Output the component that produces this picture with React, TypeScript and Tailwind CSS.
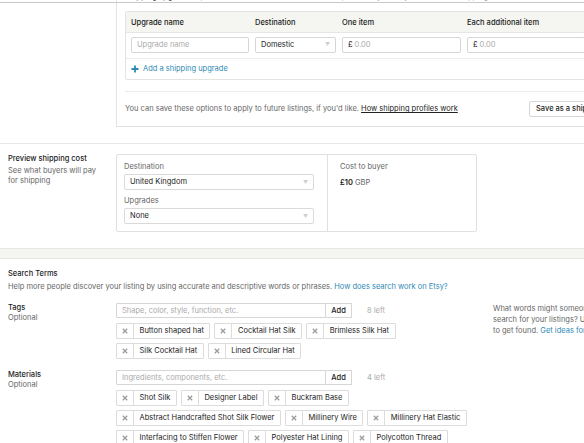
import React from "react";

const TAGS = [
  ["Button shaped hat", "Cocktail Hat Silk", "Brimless Silk Hat"],
  ["Silk Cocktail Hat", "Lined Circular Hat"],
];

const MATERIALS = [
  ["Shot Silk", "Designer Label", "Buckram Base"],
  ["Abstract Handcrafted Shot Silk Flower", "Millinery Wire", "Millinery Hat Elastic"],
  ["Interfacing to Stiffen Flower", "Polyester Hat Lining", "Polycotton Thread"],
];

function Caret() {
  return <span className="ml-auto text-[5px] text-[#cfcfcf]">▼</span>;
}

function Tag({ label }: { label: string }) {
  return (
    <div className="flex h-[16px] items-stretch rounded-[1px] border border-[#dcdcdc] bg-white">
      <div className="flex w-[17px] items-center justify-center border-r border-[#dcdcdc]">
        <svg width="6" height="6" viewBox="0 0 6 6">
          <path d="M0.8 0.8l4.4 4.4M5.2 0.8l-4.4 4.4" stroke="#9c9c9c" strokeWidth="1.3" />
        </svg>
      </div>
      <div className="flex items-center px-[5.5px] text-[#222]">{label}</div>
    </div>
  );
}

function TagField({
  label,
  placeholder,
  left,
  rows,
}: {
  label: string;
  placeholder: string;
  left: string;
  rows: string[][];
}) {
  return (
    <div className="flex">
      <div className="w-[108px] shrink-0 leading-[10px]">
        <div className="font-medium text-[#222]">{label}</div>
        <div>Optional</div>
      </div>
      <div className="w-[377px] shrink-0">
        <div className="flex h-[15px] items-stretch">
          <div className="flex w-[210px] items-center rounded-l-[1px] border border-[#d6d6d6] px-[5px] text-[#aaa]">
            {placeholder}
          </div>
          <div className="flex w-[26px] items-center justify-center border border-l-0 border-[#d6d6d6] bg-white font-medium text-[#222]">
            Add
          </div>
          <div className="ml-[15px] flex items-center text-[#aaa]">{left}</div>
        </div>
        <div className="mt-[5px] flex flex-col gap-[4px]">
          {rows.map((row, i) => (
            <div key={i} className="flex gap-[4px]">
              {row.map((t) => (
                <Tag key={t} label={t} />
              ))}
            </div>
          ))}
        </div>
      </div>
      {label === "Tags" && (
        <div className="shrink-0 whitespace-nowrap leading-[11px]">
          <div>What words might someone use to</div>
          <div>search for your listings? Use all 13 tags</div>
          <div>
            to get found. <span className="text-[#2d8ab5]">Get ideas for tags.</span>
          </div>
        </div>
      )}
    </div>
  );
}

export default function App() {
  return (
    <div className="relative h-[443px] w-[584px] overflow-hidden bg-white font-['Inter',sans-serif] text-[7.5px] text-[#666]">
      {/* sticky header edge */}
      <div className="absolute left-0 top-[2px] h-px w-full bg-[#c8c8c8]" />

      {/* Shipping upgrades */}
      <div className="-mt-[8px] flex">
        <div className="w-[116px] shrink-0" />
        <div className="w-[520px] shrink-0 border-x border-b border-[#e3e3e3] px-[8px]">
          <div className="flex leading-[10px]">
            <div className="w-[173px]">
              <span className="font-medium text-[#222]">Shipping upgrades</span> Optional
            </div>
            <div>Add faster options for your buyers (added to shipping cost)</div>
          </div>

          <div className="mt-[9px] rounded-[2px] border border-[#e3e3e3]">
            <div className="flex h-[21px] items-center gap-[6px] border-b border-[#e6e6e3] bg-[#f5f5f1] px-[5px] pt-[1px] font-medium text-[#222]">
              <div className="w-[118px]">Upgrade name</div>
              <div className="w-[81px]">Destination</div>
              <div className="w-[119px]">One item</div>
              <div className="w-[118px]">Each additional item</div>
            </div>
            <div className="flex gap-[6px] border-b border-[#ececec] px-[5px] pb-[5px] pt-[4px]">
              <div className="flex h-[16px] w-[118px] items-center rounded-[2px] border border-[#d6d6d6] px-[5px] text-[#aaa]">
                Upgrade name
              </div>
              <div className="flex h-[16px] w-[81px] items-center rounded-[2px] border border-[#d6d6d6] px-[5px] text-[#222]">
                Domestic
                <Caret />
              </div>
              <div className="flex h-[16px] w-[119px] items-center rounded-[2px] border border-[#d6d6d6] px-[5px] text-[#aaa]">
                <span className="mr-[2px] text-[#222]">£</span>0.00
              </div>
              <div className="flex h-[16px] w-[118px] items-center rounded-[2px] border border-[#d6d6d6] px-[5px] text-[#aaa]">
                <span className="mr-[2px] text-[#222]">£</span>0.00
              </div>
            </div>
            <div className="flex h-[20px] items-center px-[5px] text-[#2d8ab5]">
              <svg width="8" height="8" viewBox="0 0 8 8" className="mr-[4px]">
                <path d="M4 0.5v7M0.5 4h7" stroke="#2d8ab5" strokeWidth="1.8" />
              </svg>
              Add a shipping upgrade
            </div>
          </div>

          <div className="mt-[11px] flex h-[35px] items-center border-t border-[#ececec]">
            <div className="w-[404px] shrink-0">
              You can save these options to apply to future listings, if you'd like.{" "}
              <span className="text-[#222] underline underline-offset-1">How shipping profiles work</span>
            </div>
            <div className="flex h-[16px] items-center whitespace-nowrap rounded-[2px] border border-[#d6d6d6] bg-white px-[6px] font-medium text-[#222]">
              Save as a shipping profile
            </div>
          </div>
        </div>
      </div>

      {/* Preview shipping cost */}
      <div className="mt-[16px] flex border-t border-[#e8e8e8] pt-[10px]">
        <div className="w-[116px] shrink-0 px-[8px] leading-[10px]">
          <div className="font-medium text-[#222]">Preview shipping cost</div>
          <div className="mt-[2px]">See what buyers will pay for shipping</div>
        </div>
        <div className="flex w-[361px] shrink-0 rounded-[2px] border border-[#e0e0e0]">
          <div className="w-[211px] shrink-0 border-r border-[#e0e0e0] pb-[7px] pl-[7px] pr-[13px] pt-[7px] leading-[10px]">
            <div>Destination</div>
            <div className="mt-[2px] flex h-[16px] items-center rounded-[2px] border border-[#dadada] px-[5px] text-[#222]">
              United Kingdom
              <Caret />
            </div>
            <div className="mt-[6px]">Upgrades</div>
            <div className="mt-[2px] flex h-[16px] items-center rounded-[2px] border border-[#dadada] px-[5px] text-[#222]">
              None
              <Caret />
            </div>
          </div>
          <div className="flex-1 pl-[12px] pt-[7px] leading-[10px]">
            <div>Cost to buyer</div>
            <div className="mt-[6px]">
              <span className="font-semibold text-[#222]">£10</span> GBP
            </div>
          </div>
        </div>
      </div>

      <div className="mt-[16px] h-[11px] border-y border-[#e6e6e1] bg-[#f5f5f1]" />

      {/* Search terms */}
      <div className="px-[8px] pt-[10px]">
        <div className="font-medium leading-[10px] text-[#222]">Search Terms</div>
        <div className="mt-[3px] leading-[10px]">
          Help more people discover your listing by using accurate and descriptive words or phrases.{" "}
          <span className="text-[#2d8ab5]">How does search work on Etsy?</span>
        </div>
        <div className="mt-[11px]">
          <TagField label="Tags" placeholder="Shape, color, style, function, etc." left="8 left" rows={TAGS} />
        </div>
        <div className="mt-[11px]">
          <TagField
            label="Materials"
            placeholder="Ingredients, components, etc."
            left="4 left"
            rows={MATERIALS}
          />
        </div>
      </div>
    </div>
  );
}
